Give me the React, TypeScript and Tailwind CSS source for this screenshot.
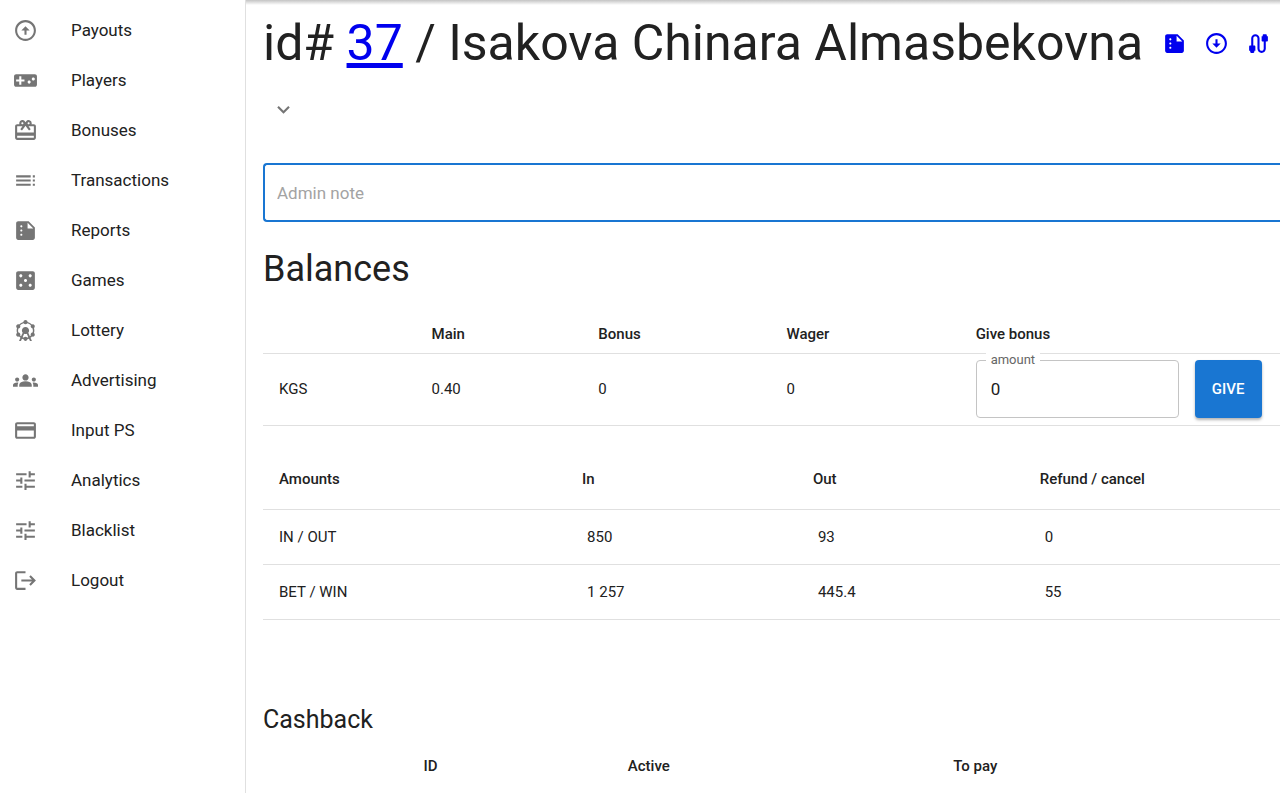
import type { ReactNode } from "react";
import {
  MdAttractions,
  MdCable,
  MdCardGiftcard,
  MdCasino,
  MdExpandMore,
  MdGroups,
  MdLogout,
  MdOutlineArrowCircleDown,
  MdOutlineArrowCircleUp,
  MdPayment,
  MdSummarize,
  MdToc,
  MdTune,
  MdVideogameAsset,
} from "react-icons/md";

const menu = [
  { icon: MdOutlineArrowCircleUp, label: "Payouts" },
  { icon: MdVideogameAsset, label: "Players" },
  { icon: MdCardGiftcard, label: "Bonuses" },
  { icon: MdToc, label: "Transactions" },
  { icon: MdSummarize, label: "Reports" },
  { icon: MdCasino, label: "Games" },
  { icon: MdAttractions, label: "Lottery" },
  { icon: MdGroups, label: "Advertising" },
  { icon: MdPayment, label: "Input PS" },
  { icon: MdTune, label: "Analytics" },
  { icon: MdTune, label: "Blacklist" },
  { icon: MdLogout, label: "Logout" },
];

const playerLinks = [
  { icon: MdSummarize, label: "Player report" },
  { icon: MdOutlineArrowCircleDown, label: "Payins" },
  { icon: MdCable, label: "Connections" },
];

const amounts = [
  { name: "IN / OUT", values: ["850", "93", "0"] },
  { name: "BET / WIN", values: ["1 257", "445.4", "55"] },
];

function Th({ children }: { children?: ReactNode }) {
  return <th className="px-4 text-left font-medium">{children}</th>;
}

export default function App() {
  return (
    <div className="flex h-screen overflow-hidden bg-white font-['Roboto','Liberation_Sans',sans-serif] text-[#212121]">
      {/* Sidebar */}
      <nav className="w-[246px] shrink-0 border-r border-[#e0e0e0] pt-[5px]">
        <ul>
          {menu.map((item) => (
            <li key={item.label}>
              <a href="#" className="flex h-[50px] items-center pl-[13px] text-[17px]">
                <item.icon size={25} className="shrink-0 text-[#757575]" />
                <span className="ml-[33px] pt-px">{item.label}</span>
              </a>
            </li>
          ))}
        </ul>
      </nav>

      <main className="min-w-0 flex-1 overflow-hidden">
        {/* Shadow of the app bar */}
        <div className="h-[5px] bg-linear-to-b from-[#c4c4c4] to-white" />
        <div className="pl-[17px]">
          {/* Player */}
          <div className="flex h-[76px] items-center whitespace-nowrap">
            <h1 className="text-[50px] leading-[58px]">
              id# <a href="#" className="text-[#0000ee] underline">37</a> / Isakova Chinara Almasbekovna
            </h1>
            <div className="ml-[19px] flex gap-[17px] text-[#0000ee]">
              {playerLinks.map((link) => (
                <a key={link.label} href="#" aria-label={link.label}>
                  <link.icon size={25} />
                </a>
              ))}
            </div>
          </div>
          <button
            type="button"
            aria-label="Show details"
            className="mt-2 flex h-[41px] w-[41px] items-center justify-center text-[#757575]"
          >
            <MdExpandMore size={25} />
          </button>

          <input
            type="text"
            aria-label="Admin note"
            placeholder="Admin note"
            className="mt-[33px] block h-[59px] w-full rounded-l border-2 border-r-0 border-[#1976d2] px-3 text-[17px] outline-none placeholder:text-[#a3a3a3]"
          />

          {/* Balances */}
          <h2 className="mt-[25px] text-[36px] leading-[44px]">Balances</h2>
          <table className="mt-6 w-full table-fixed border-collapse text-[15px]">
            <colgroup>
              <col className="w-[15%]" />
              <col className="w-[16.4%]" />
              <col className="w-[18.5%]" />
              <col className="w-[18.6%]" />
              <col />
            </colgroup>
            <thead>
              <tr className="h-[38px] border-b border-[#e0e0e0]">
                <Th />
                <Th>Main</Th>
                <Th>Bonus</Th>
                <Th>Wager</Th>
                <Th>Give bonus</Th>
              </tr>
            </thead>
            <tbody>
              <tr className="h-[72px] border-b border-[#e0e0e0]">
                <td className="px-4">KGS</td>
                <td className="px-4">0.40</td>
                <td className="px-4">0</td>
                <td className="px-4">0</td>
                <td className="pl-4">
                  <form className="flex gap-4">
                    <div className="relative">
                      <label
                        htmlFor="amount"
                        className="absolute -top-2 left-[10px] bg-white px-[5px] text-[13px] leading-4 text-[#666666]"
                      >
                        amount
                      </label>
                      <input
                        id="amount"
                        type="text"
                        defaultValue="0"
                        className="h-[58px] w-[203px] rounded border border-[#c4c4c4] px-[14px] text-[17px]"
                      />
                    </div>
                    <button
                      type="button"
                      className="h-[58px] w-[67px] rounded bg-[#1976d2] font-medium text-white shadow-[0_2px_3px_rgba(0,0,0,0.3)]"
                    >
                      GIVE
                    </button>
                  </form>
                </td>
              </tr>
            </tbody>
          </table>

          <table className="mt-6 w-full table-fixed border-collapse text-[15px]">
            <colgroup>
              <col className="w-[29.8%]" />
              <col className="w-[22.7%]" />
              <col className="w-[22.3%]" />
              <col />
            </colgroup>
            <thead>
              <tr className="h-[60px] border-b border-[#e0e0e0]">
                <Th>Amounts</Th>
                <Th>In</Th>
                <Th>Out</Th>
                <Th>Refund / cancel</Th>
              </tr>
            </thead>
            <tbody>
              {amounts.map((row) => (
                <tr key={row.name} className="h-[55px] border-b border-[#e0e0e0]">
                  <td className="px-4">{row.name}</td>
                  {row.values.map((value) => (
                    <td key={value} className="px-[21px]">{value}</td>
                  ))}
                </tr>
              ))}
            </tbody>
          </table>

          {/* Cashback */}
          <h3 className="mt-[83px] text-[25px] leading-[34px]">Cashback</h3>
          <table className="w-full table-fixed border-collapse text-[15px]">
            <colgroup>
              <col className="w-[14.2%]" />
              <col className="w-[20.1%]" />
              <col className="w-[32%]" />
              <col />
            </colgroup>
            <thead>
              <tr className="h-[58px]">
                <Th />
                <Th>ID</Th>
                <Th>Active</Th>
                <Th>To pay</Th>
              </tr>
            </thead>
          </table>
        </div>
      </main>
    </div>
  );
}
